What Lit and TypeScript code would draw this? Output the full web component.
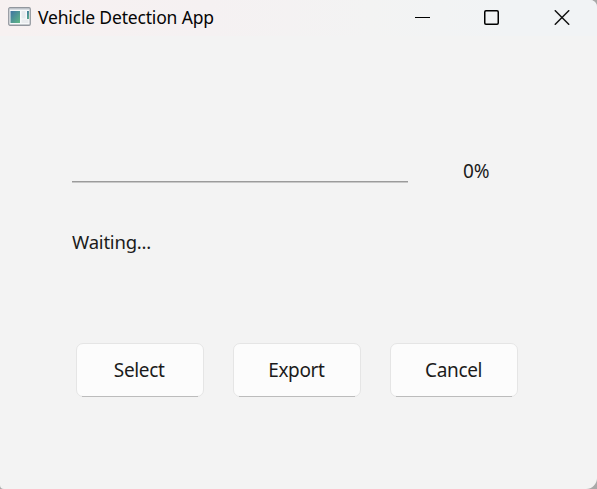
import { LitElement, html, css } from "lit";
import { customElement, property } from "lit/decorators.js";

@customElement("push-button")
class PushButton extends LitElement {
  @property() label = "";
  static styles = css`
    :host { display: block; width: 128.4px; height: 54px; }
    button {
      display: flex; align-items: center; justify-content: center;
      position: relative; box-sizing: border-box; width: 100%; height: 100%;
      padding: 0 1px 0 0; border: 1px solid #e5e5e5; border-radius: 7px;
      background: #fcfcfc; color: #1b1b1b;
      font: 19px/26px "Noto Sans", "Open Sans", sans-serif;
      letter-spacing: -0.35px;
    }
    button::after {
      content: ""; position: absolute; left: 5px; right: 5px; bottom: -1px;
      height: 1px; background: #bcbcbc;
    }
  `;
  render() {
    return html`<button><span>${this.label}</span></button>`;
  }
}

@customElement("app-root")
class AppRoot extends LitElement {
  static styles = css`
    :host {
      display: block; width: 597px; height: 489px; overflow: hidden;
      background: #a9a9a9; color: #1b1b1b;
      font-family: "Noto Sans", "Open Sans", sans-serif;
    }
    .window {
      display: flex; flex-direction: column; box-sizing: border-box;
      height: 489px; background: #f3f3f3; overflow: hidden;
      border-radius: 0 7px 11px 4px;
    }
    .titlebar {
      display: flex; align-items: center; height: 36px; padding-left: 8px;
      background: linear-gradient(90deg, #f7f1f1 0%, #f5f1f2 35%, #f3f3f3 62%, #f1f3f5 85%, #f1f3f5 100%);
      flex: none;
    }
    svg { display: block; flex: none; }
    .app-icon { margin-bottom: 3px; }
    .title {
      margin-left: 7px; flex: 1; white-space: nowrap; color: #050505;
      font-size: 17.5px; line-height: 35px; height: 36px; letter-spacing: -0.17px;
    }
    .controls { display: flex; padding-right: 27px; gap: 54px; margin-bottom: 1px; }
    .controls svg:last-child { margin-left: 1px; }
    .content { padding: 124px 75px 0 72px; }
    .progress { display: flex; height: 26px; align-items: flex-end; }
    .track {
      width: 336px; height: 1px; background: #9b9b9b; margin-bottom: 3px;
      border-bottom: 1px solid #c8c8c8;
    }
    .percent { margin: 0 0 2px 55px; font-size: 19px; line-height: 26px; letter-spacing: 0; }
    .status { margin-top: 42px; font-size: 18.5px; line-height: 27px; letter-spacing: -0.2px; }
    .actions { display: flex; gap: 28.8px; margin: 88px 0 0 3.5px; }
  `;
  render() {
    return html`
      <div class="window">
        <header class="titlebar">
          <svg class="app-icon" width="23" height="19" viewBox="0 0 23 19">
            <defs>
              <linearGradient id="pane" x1="0" y1="0" x2="1" y2="1">
                <stop offset="0" stop-color="#3f73a3" />
                <stop offset="1" stop-color="#61b985" />
              </linearGradient>
            </defs>
            <rect x=".75" y=".75" width="21.5" height="17.5" rx="1.2" fill="#f7f9fa" stroke="#92979e" stroke-width="1.3" />
            <path d="M1.4 2h20.2" stroke="#b6bdc6" />
            <rect x="2.5" y="4" width="9.5" height="12" fill="url(#pane)" />
            <rect x="13.5" y="4" width="4" height="7.5" fill="#e5e9ec" />
            <rect x="13.5" y="12.5" width="7" height="3.5" fill="#e9ecee" />
            <rect x="19" y="4" width="2" height="8" fill="url(#pane)" />
          </svg>
          <span class="title">Vehicle Detection App</span>
          <div class="controls">
            <svg width="15" height="15" viewBox="0 0 15 15"><path d="M0 7.5h15" stroke="#000" /></svg>
            <svg width="15" height="15" viewBox="0 0 15 15"><rect x=".75" y=".75" width="13.5" height="13.5" rx="1.2" fill="none" stroke="#000" stroke-width="1.5" /></svg>
            <svg width="16" height="15" viewBox="0 0 16 15"><path d="M.8.3l14.4 14.4M15.2.3L.8 14.7" fill="none" stroke="#111" stroke-width="1.5" /></svg>
          </div>
        </header>
        <main class="content">
          <div class="progress">
            <div class="track"></div>
            <span class="percent">0%</span>
          </div>
          <div class="status">Waiting...</div>
          <div class="actions">
            <push-button label="Select"></push-button>
            <push-button label="Export"></push-button>
            <push-button label="Cancel"></push-button>
          </div>
        </main>
      </div>
    `;
  }
}
